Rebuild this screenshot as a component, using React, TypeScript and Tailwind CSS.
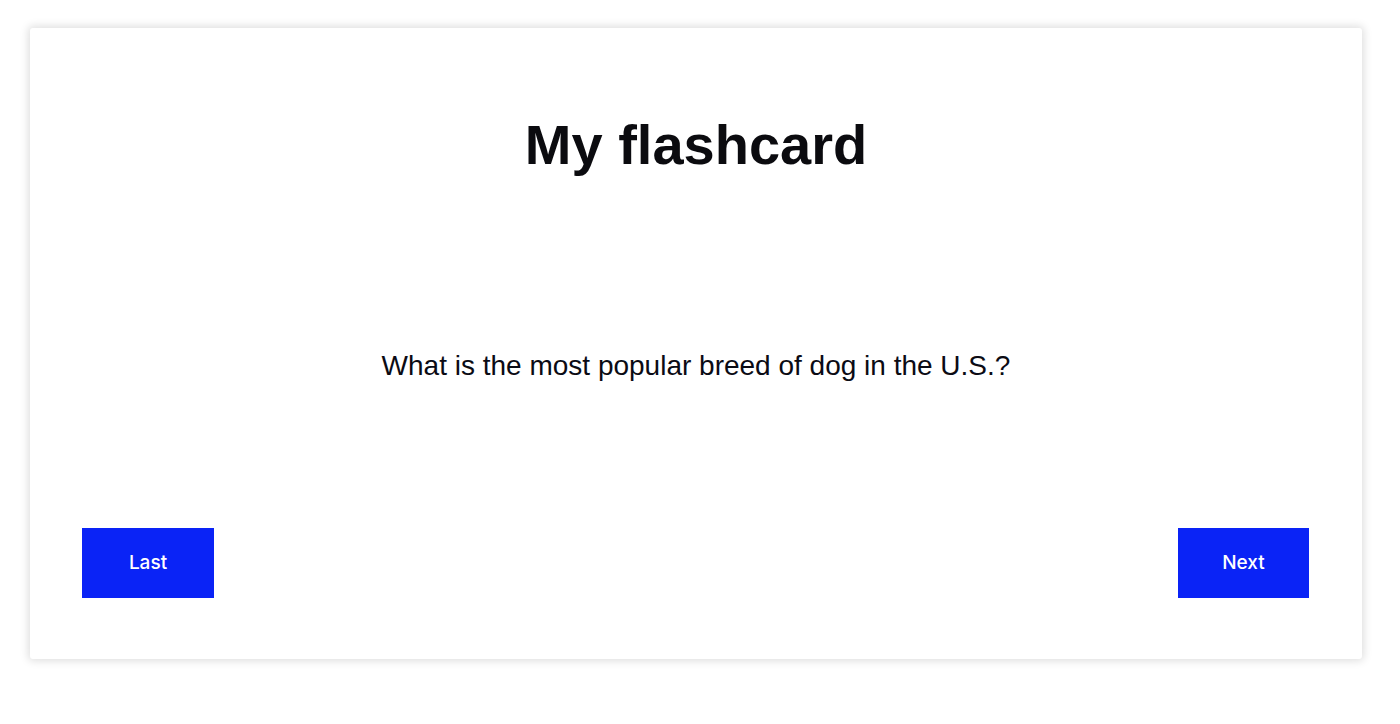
export default function App() {
  return (
    <div className="min-h-[724px] w-[1400px] bg-white pt-[28px] pl-[30px]">
      <div className="flex h-[631px] w-[1332px] flex-col rounded-[3px] bg-white px-[52px] pt-[85px] shadow-[0_0_8px_2px_rgba(0,0,0,0.13)]">
        <h1 className="text-center font-['Liberation_Sans',Arial,sans-serif] text-[56px] font-bold leading-[64px] text-[#0b0b0f]">
          My flashcard
        </h1>
        <p className="mt-[173px] text-center font-['Liberation_Sans',Arial,sans-serif] text-[28px] leading-[32px] text-[#0b0b14]">
          What is the most popular breed of dog in the U.S.?
        </p>
        <div className="mt-[146px] flex justify-between">
          <button className="h-[70px] w-[132px] bg-[#0a23f6] pt-[1px] font-['Inter','Noto_Sans',sans-serif] text-[19px] font-medium text-white">
            Last
          </button>
          <button className="mr-[1px] h-[70px] w-[131px] bg-[#0a23f6] pt-[1px] font-['Inter','Noto_Sans',sans-serif] text-[19px] font-medium text-white">
            Next
          </button>
        </div>
      </div>
    </div>
  );
}
